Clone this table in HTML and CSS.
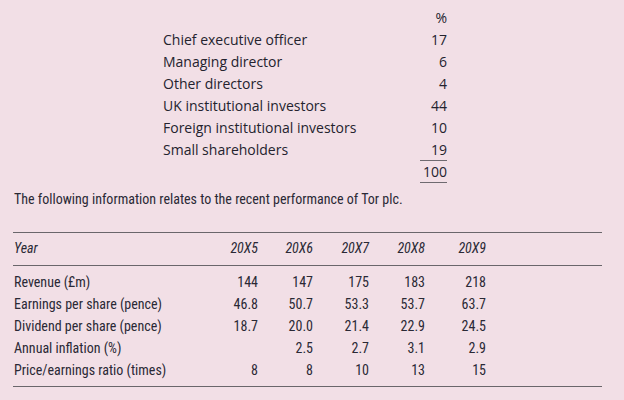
FILE: index.html
```html
<!DOCTYPE html>
<html lang="en">
<head>
<meta charset="utf-8">
<link rel="stylesheet" href="styles.css">
</head>
<body>
<div class="page">
  <div class="holders">
    <div class="label"></div><div class="num">%</div>
    <div class="label">Chief executive officer</div><div class="num">17</div>
    <div class="label">Managing director</div><div class="num">6</div>
    <div class="label">Other directors</div><div class="num">4</div>
    <div class="label">UK institutional investors</div><div class="num">44</div>
    <div class="label">Foreign institutional investors</div><div class="num">10</div>
    <div class="label">Small shareholders</div><div class="num"><span class="ul">19</span></div>
    <div class="label"></div><div class="num"><span class="ul">100</span></div>
  </div>

  <p class="intro">The following information relates to the recent performance of Tor plc.</p>

  <div class="perf">
    <div class="row head">
      <div class="c lab">Year</div>
      <div class="c n">20X5</div>
      <div class="c n">20X6</div>
      <div class="c n">20X7</div>
      <div class="c n">20X8</div>
      <div class="c n">20X9</div>
    </div>
    <div class="body">
      <div class="row">
        <div class="c lab">Revenue (£m)</div>
        <div class="c n">144</div><div class="c n">147</div><div class="c n">175</div><div class="c n">183</div><div class="c n">218</div>
      </div>
      <div class="row">
        <div class="c lab">Earnings per share (pence)</div>
        <div class="c n">46.8</div><div class="c n">50.7</div><div class="c n">53.3</div><div class="c n">53.7</div><div class="c n">63.7</div>
      </div>
      <div class="row">
        <div class="c lab">Dividend per share (pence)</div>
        <div class="c n">18.7</div><div class="c n">20.0</div><div class="c n">21.4</div><div class="c n">22.9</div><div class="c n">24.5</div>
      </div>
      <div class="row">
        <div class="c lab">Annual inflation (%)</div>
        <div class="c n"></div><div class="c n">2.5</div><div class="c n">2.7</div><div class="c n">3.1</div><div class="c n">2.9</div>
      </div>
      <div class="row">
        <div class="c lab">Price/earnings ratio (times)</div>
        <div class="c n">8</div><div class="c n">8</div><div class="c n">10</div><div class="c n">13</div><div class="c n">15</div>
      </div>
    </div>
  </div>
</div>
</body>
</html>
```
FILE: styles.css
```css
html, body {
  margin: 0;
  padding: 0;
  background: #f2dfe6;
}
body {
  font-family: "Open Sans", "Noto Sans", sans-serif;
  font-size: 14px;
  line-height: 22px;
  color: #24232e;
}
.page {
  padding: 7px 0 0 0;
  width: 624px;
  height: 400px;
  box-sizing: border-box;
  overflow: hidden;
}
.holders {
  margin-left: 163px;
  width: 284px;
  display: grid;
  grid-template-columns: 1fr auto;
}
.holders .num {
  text-align: right;
}
.holders .ul {
  display: inline-block;
  min-width: 27px;
  height: 21px;
  text-align: right;
  border-bottom: 1px solid #6f6a70;
}
.intro,
.perf {
  font-family: "Roboto", "Open Sans", sans-serif;
  font-stretch: 75%;
  font-size: 14px;
  color: #2a2935;
}
.intro {
  margin: 5px 0 0 14px;
}
.perf {
  margin: 22px 0 0 13px;
  width: 589px;
  border-top: 1px solid #6a666b;
  border-bottom: 1px solid #6a666b;
}
.row {
  display: grid;
  grid-template-columns: 195px 50px 55px 56px 56px 61px 1fr;
}
.head {
  padding: 4px 0 6px;
  border-bottom: 1px solid #6a666b;
  font-style: italic;
}
.body {
  padding: 5px 0 5px;
}
.lab {
  padding-left: 1px;
}
.n {
  text-align: right;
}
```
